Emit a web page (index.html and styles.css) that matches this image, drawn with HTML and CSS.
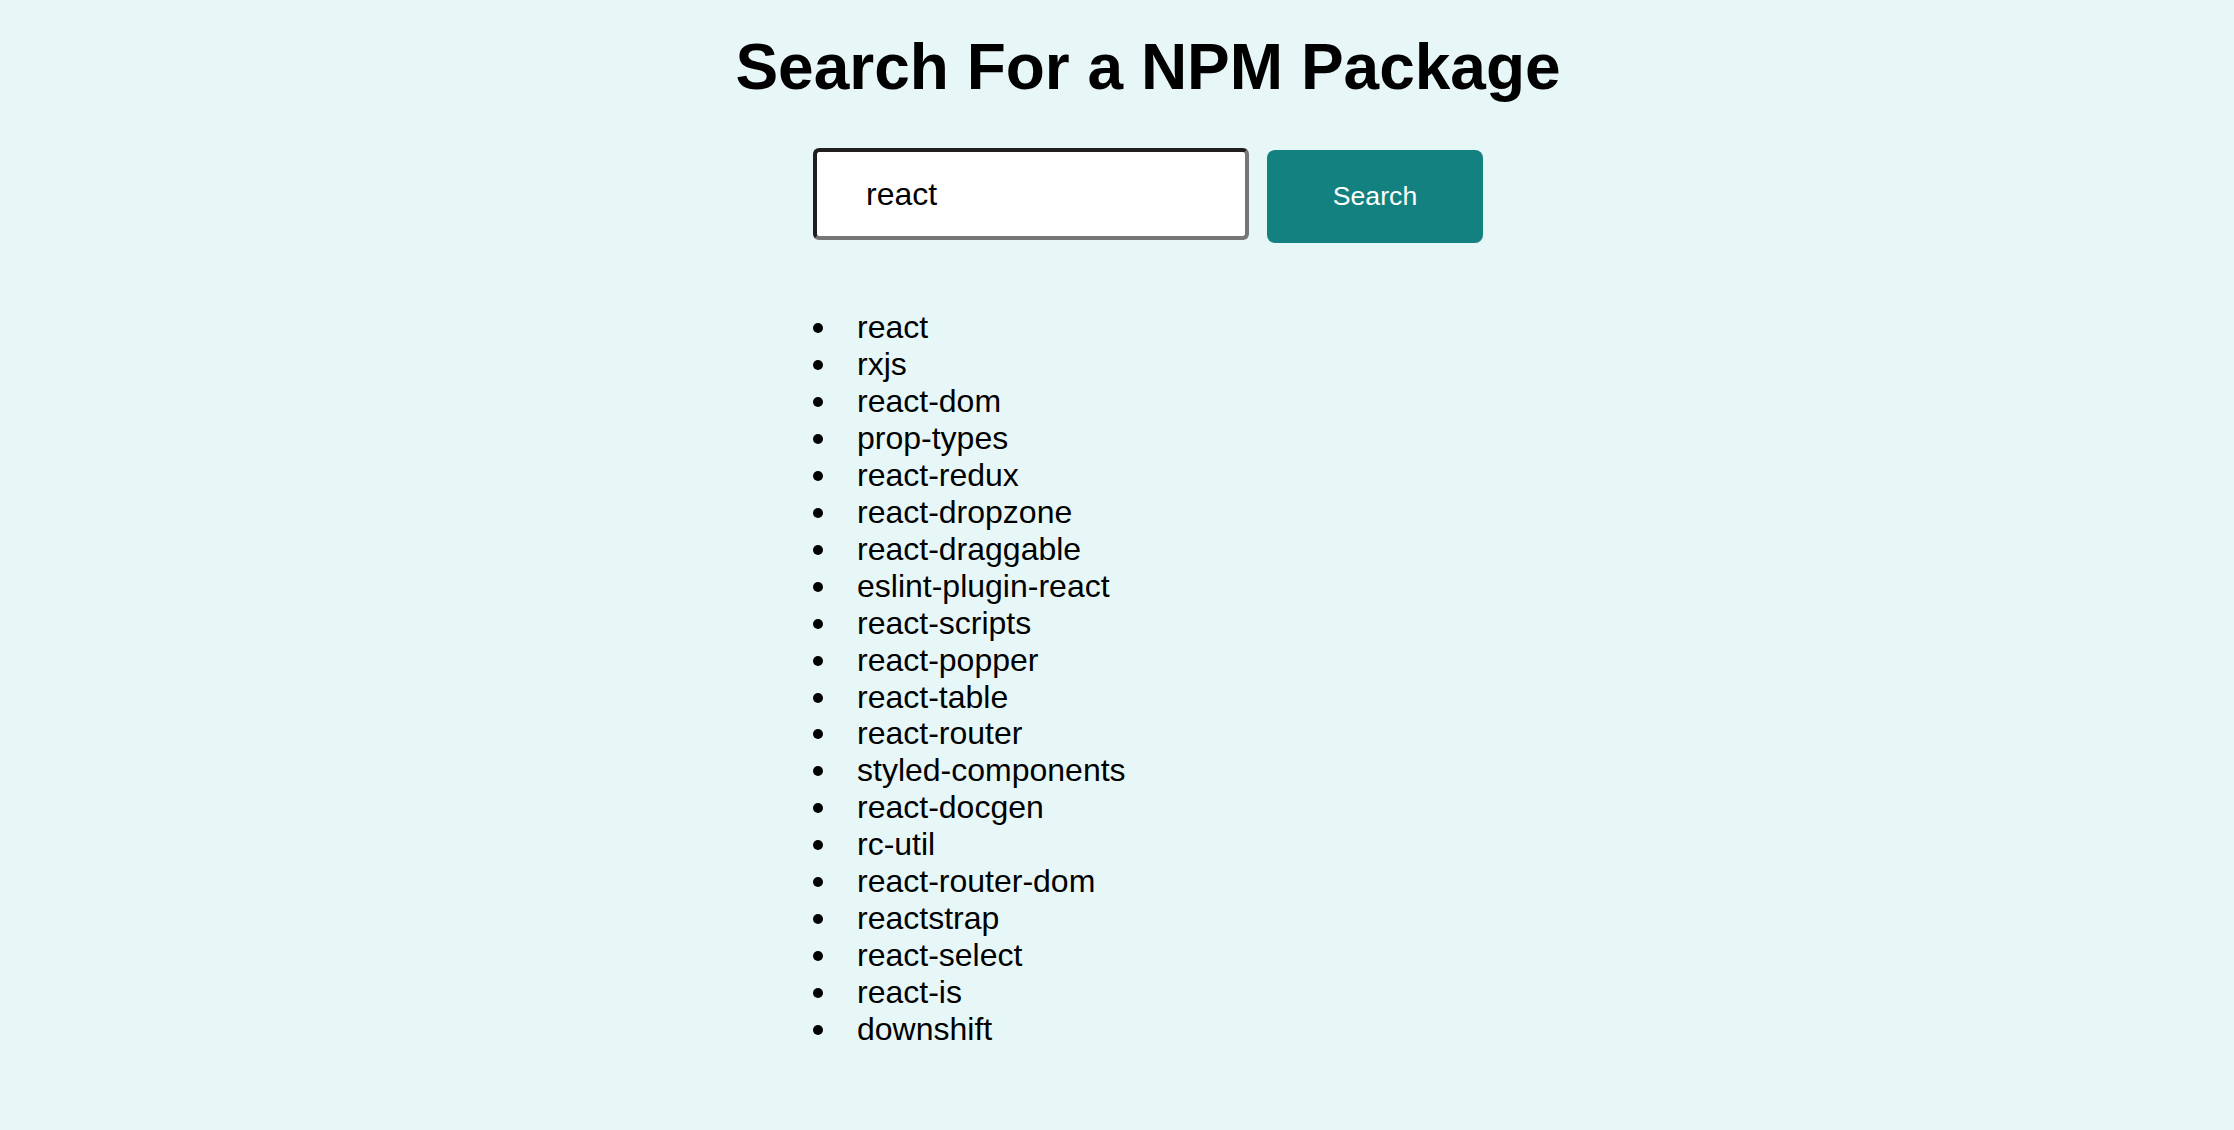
FILE: index.html
```html
<!DOCTYPE html>
<html lang="en">
<head>
<meta charset="utf-8">
<title>Search For a NPM Package</title>
<link rel="stylesheet" href="styles.css">
</head>
<body>
<main class="page">
  <h1 class="title">Search For a NPM Package</h1>
  <div class="column">
    <form class="search-form" onsubmit="return false">
      <input class="search-input" type="text" value="react">
      <button class="search-button" type="submit">Search</button>
    </form>
    <ul class="results">
      <li>react</li>
      <li>rxjs</li>
      <li>react-dom</li>
      <li>prop-types</li>
      <li>react-redux</li>
      <li>react-dropzone</li>
      <li>react-draggable</li>
      <li>eslint-plugin-react</li>
      <li>react-scripts</li>
      <li>react-popper</li>
      <li>react-table</li>
      <li>react-router</li>
      <li>styled-components</li>
      <li>react-docgen</li>
      <li>rc-util</li>
      <li>react-router-dom</li>
      <li>reactstrap</li>
      <li>react-select</li>
      <li>react-is</li>
      <li>downshift</li>
    </ul>
  </div>
</main>
</body>
</html>
```

FILE: styles.css
```css
html, body {
  margin: 0;
  padding: 0;
  background: #e7f7f7;
}

body {
  font-family: "Liberation Sans", Arial, Helvetica, sans-serif;
  color: #000;
  min-height: 1130px;
}

.page {
  padding-left: 62px;
  display: flex;
  flex-direction: column;
  align-items: center;
}

.title {
  margin: 30px 0 0;
  font-size: 64px;
  line-height: 74px;
  font-weight: 700;
  text-align: center;
}

.column {
  width: 670px;
  margin-top: 44px;
}

.search-form {
  display: flex;
  align-items: flex-start;
  gap: 18px;
  margin: 0;
}

.search-input {
  box-sizing: border-box;
  width: 436px;
  height: 92px;
  margin: 0;
  padding: 0 0 0 49px;
  border: 4px solid;
  border-color: #1f1f1f #767676 #767676 #1f1f1f;
  border-radius: 6px;
  background: #fff;
  font-family: "Liberation Sans", Arial, Helvetica, sans-serif;
  font-size: 32px;
  color: #000;
  outline: none;
}

.search-button {
  box-sizing: border-box;
  width: 217px;
  height: 93px;
  margin: 2px 0 0;
  padding: 0;
  border: none;
  border-radius: 8px;
  background: #128180;
  color: #fff;
  font-family: "Liberation Sans", Arial, Helvetica, sans-serif;
  font-size: 26.67px;
  cursor: pointer;
}

.results {
  list-style: none;
  margin: 66px 0 0;
  padding: 0;
  font-size: 32px;
  line-height: 36.95px;
}

.results li::before {
  content: "";
  display: inline-block;
  width: 10px;
  height: 10px;
  border-radius: 50%;
  background: #000;
  margin-right: 34px;
  vertical-align: 5px;
}
```
